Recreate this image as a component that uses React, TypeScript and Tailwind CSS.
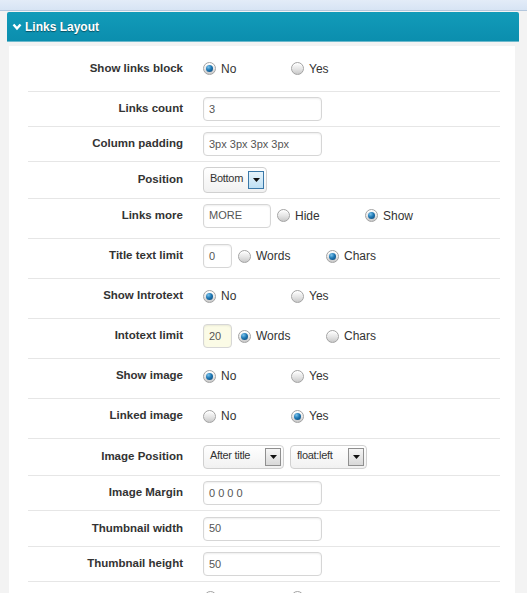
import type { ReactNode } from "react";

const font = { fontFamily: '"Liberation Sans", Arial, sans-serif' };

function Radio({ checked }: { checked?: boolean }) {
  return (
    <span className="relative flex size-[13px] shrink-0 items-center justify-center rounded-full border border-[#a3a3a3] bg-[linear-gradient(180deg,#ffffff_0%,#e4e4e4_55%,#c9c9c9_100%)] shadow-[inset_0_1px_0_#fff]">
      {checked ? (
        <span className="size-[7px] rounded-full bg-[radial-gradient(circle_at_35%_30%,#7cc3ec_0%,#1e78b4_45%,#0b3f6e_100%)]" />
      ) : null}
    </span>
  );
}

function Option({ label, checked }: { label: string; checked?: boolean }) {
  return (
    <span className="flex w-[88px] items-center gap-[5px] text-[12px] text-[#333]">
      <Radio checked={checked} />
      <span>{label}</span>
    </span>
  );
}

function Options({ children }: { children: ReactNode }) {
  return <span className="flex items-center">{children}</span>;
}

function TextInput({
  value,
  width,
  tint,
}: {
  value: string;
  width: string;
  tint?: boolean;
}) {
  return (
    <span
      className={`flex h-[24px] items-center rounded-[4px] border border-[#d6d6d6] px-[5px] text-[11px] text-[#555] shadow-[inset_0_1px_2px_rgba(0,0,0,0.07)] ${width} ${
        tint ? "bg-[#fbfbe6]" : "bg-white"
      }`}
    >
      {value}
    </span>
  );
}

function Select({
  value,
  width,
  active,
}: {
  value: string;
  width: string;
  active?: boolean;
}) {
  return (
    <span
      className={`flex items-center justify-between rounded-[4px] border border-[#d0d0d0] bg-[linear-gradient(180deg,#ffffff,#f1f1f1)] pl-[6px] pr-[2px] text-[11px] tracking-[-0.3px] text-[#333] ${width} ${
        active ? "h-[26px]" : "h-[24px]"
      }`}
    >
      <span className="-mt-[3px]">{value}</span>
      <span
        className={`flex h-[18px] w-[16px] items-center justify-center border ${
          active
            ? "border-[#3a78a8] bg-[linear-gradient(180deg,#e6f4fc,#bfe0f4)]"
            : "border-[#8f8f8f] bg-[linear-gradient(180deg,#f6f6f6,#d8d8d8)]"
        }`}
      >
        <svg width="7" height="4" viewBox="0 0 7 4">
          <polygon points="0,0 7,0 3.5,4" fill="#111" />
        </svg>
      </span>
    </span>
  );
}

function Row({
  label,
  height,
  children,
}: {
  label: string;
  height: string;
  children: ReactNode;
}) {
  return (
    <div className={`flex items-center border-b border-[#e6e6e6] ${height}`}>
      <div className="w-[155px] shrink-0 text-right text-[11.5px] font-bold text-[#333]">
        {label}
      </div>
      <div className="ml-[20px] flex items-center gap-[6px]">{children}</div>
    </div>
  );
}

export default function App() {
  return (
    <div className="min-h-screen overflow-hidden bg-[#f3f3f3]" style={font}>
      <div className="h-[11px] border-b border-[#b4c7dd] bg-[linear-gradient(180deg,#e3ecf8,#d7e4f4)]" />
      <div className="ml-[7px] mt-[1px] flex h-[30px] w-[512px] items-center gap-[3px] rounded-t-[2px] border-b border-[#6cb9cc] bg-[linear-gradient(180deg,#129bb9,#0b8eae)] pl-[5px] text-[12px] font-bold text-white [text-shadow:0_1px_1px_rgba(0,0,0,0.45)]">
        <svg width="10" height="8" viewBox="0 0 10 8" className="mt-[1px]">
          <polyline
            points="1.5,1.5 5,5.5 8.5,1.5"
            fill="none"
            stroke="#fff"
            strokeWidth="2.4"
          />
        </svg>
        <span>Links Layout</span>
      </div>
      <div className="ml-[9px] mt-[4px] w-[506px] bg-white pl-[19px] pr-[15px] pt-[3px]">
        <Row label="Show links block" height="h-[43px] pb-[3px]">
          <Options>
            <Option label="No" checked />
            <Option label="Yes" />
          </Options>
        </Row>
        <Row label="Links count" height="h-[35px]">
          <TextInput value="3" width="w-[119px]" />
        </Row>
        <Row label="Column padding" height="h-[35px]">
          <TextInput value="3px 3px 3px 3px" width="w-[119px]" />
        </Row>
        <Row label="Position" height="h-[37px]">
          <Select value="Bottom" width="w-[64px]" active />
        </Row>
        <Row label="Links more" height="h-[40px] pb-[6px]">
          <TextInput value="MORE" width="w-[68px]" />
          <Options>
            <Option label="Hide" />
            <Option label="Show" checked />
          </Options>
        </Row>
        <Row label="Title text limit" height="h-[40px] pb-[5px]">
          <TextInput value="0" width="w-[29px]" />
          <Options>
            <Option label="Words" />
            <Option label="Chars" checked />
          </Options>
        </Row>
        <Row label="Show Introtext" height="h-[40px] pb-[5px]">
          <Options>
            <Option label="No" checked />
            <Option label="Yes" />
          </Options>
        </Row>
        <Row label="Intotext limit" height="h-[40px] pb-[5px]">
          <TextInput value="20" width="w-[29px]" tint />
          <Options>
            <Option label="Words" checked />
            <Option label="Chars" />
          </Options>
        </Row>
        <Row label="Show image" height="h-[40px] pb-[5px]">
          <Options>
            <Option label="No" checked />
            <Option label="Yes" />
          </Options>
        </Row>
        <Row label="Linked image" height="h-[40px] pb-[5px]">
          <Options>
            <Option label="No" />
            <Option label="Yes" checked />
          </Options>
        </Row>
        <Row label="Image Position" height="h-[37px]">
          <Select value="After title" width="w-[81px]" />
          <Select value="float:left" width="w-[77px]" />
        </Row>
        <Row label="Image Margin" height="h-[35px]">
          <TextInput value="0 0 0 0" width="w-[119px]" />
        </Row>
        <Row label="Thumbnail width" height="h-[36px]">
          <TextInput value="50" width="w-[119px]" />
        </Row>
        <Row label="Thumbnail height" height="h-[35px]">
          <TextInput value="50" width="w-[119px]" />
        </Row>
        <div className="flex h-[40px] items-start pl-[176px] pt-[9px]">
          <span className="w-[87px]">
            <Radio checked />
          </span>
          <Radio />
        </div>
      </div>
    </div>
  );
}
